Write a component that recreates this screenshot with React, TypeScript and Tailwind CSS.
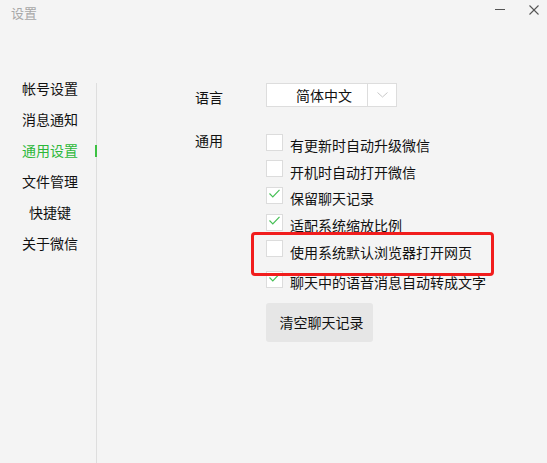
import React from "react";

const FONT = '"Noto Sans CJK SC", "Noto Sans", sans-serif';

const navItems = ["帐号设置", "消息通知", "通用设置", "文件管理", "快捷键", "关于微信"];

const options: { label: string; checked: boolean; extra?: string }[] = [
  { label: "有更新时自动升级微信", checked: false },
  { label: "开机时自动打开微信", checked: false },
  { label: "保留聊天记录", checked: true },
  { label: "适配系统缩放比例", checked: true },
  { label: "使用系统默认浏览器打开网页", checked: false },
  { label: "聊天中的语音消息自动转成文字", checked: true, extra: "mt-[4px]" },
];

function CheckBox({ checked }: { checked: boolean }) {
  return (
    <div className="w-[17px] h-[17px] shrink-0 border border-[#dcdcdc] bg-white">
      {checked && (
        <svg width="15" height="15" viewBox="0 0 15 15" fill="none">
          <polyline points="2.5,5.5 5.8,8.8 12.5,1.8" stroke="#46bf55" strokeWidth="1.2" />
        </svg>
      )}
    </div>
  );
}

export default function App() {
  return (
    <div
      className="relative w-[547px] h-[463px] bg-[#f4f4f4] flex flex-col overflow-hidden text-[#111111]"
      style={{ fontFamily: FONT }}
    >
      {/* title bar */}
      <div className="h-[73px] shrink-0 flex items-start justify-between">
        <div className="pl-[11px] pt-[4px] text-[13px] leading-[18px] text-[#a8a8a8]">设置</div>
        <div className="flex items-start">
          <svg width="12" height="12" viewBox="0 0 12 12" className="mt-[4px] mr-[22px]">
            <line x1="1" y1="5.5" x2="11" y2="5.5" stroke="#555" strokeWidth="1" />
          </svg>
          <svg width="12" height="12" viewBox="0 0 12 12" className="mt-[4px] mr-[7px]">
            <line x1="1.5" y1="1.5" x2="10.5" y2="10.5" stroke="#555" strokeWidth="1.1" />
            <line x1="10.5" y1="1.5" x2="1.5" y2="10.5" stroke="#555" strokeWidth="1.1" />
          </svg>
        </div>
      </div>

      <div className="flex flex-1">
        {/* side navigation */}
        <div className="flex">
          <div className="w-[96px] pl-[4px] flex flex-col">
            {navItems.map((item) => (
              <div
                key={item}
                className={`h-[31px] flex items-center justify-center text-[14px] ${
                  item === "通用设置" ? "text-[#2cb83a]" : "text-[#111111]"
                }`}
              >
                {item}
              </div>
            ))}
          </div>
          <div className="relative w-px mt-[10px] bg-[#dedede]">
            <div className="absolute left-[-1px] top-[62px] w-[2px] h-[12px] bg-[#3cc142]" />
          </div>
        </div>

        {/* general settings */}
        <div className="flex-1 pl-[98px] pt-[10px]">
          <div className="flex items-center h-[24px]">
            <div className="w-[71px] text-[14px] pt-[4px]">语言</div>
            <div className="flex h-[24px] w-[131px] border border-[#dddddd] bg-white">
              <div className="w-[100px] flex items-center pl-[29px] text-[14px]">简体中文</div>
              <div className="flex-1 border-l border-[#dddddd] flex items-center justify-center">
                <svg width="11" height="6" viewBox="0 0 11 6">
                  <polyline points="0.5,0.5 5.5,5 10.5,0.5" fill="none" stroke="#c8c8c8" strokeWidth="1" />
                </svg>
              </div>
            </div>
          </div>

          <div className="flex mt-[22px]">
            <div className="w-[71px] text-[14px] leading-[20px] pt-[1px]">通用</div>
            <div className="flex flex-col">
              {options.map((o) => (
                <div key={o.label} className={`h-[26.6px] flex items-center ${o.extra ?? ""}`}>
                  <CheckBox checked={o.checked} />
                  <span className="ml-[7px] mt-[6px] text-[14px] leading-[18px] whitespace-nowrap">{o.label}</span>
                </div>
              ))}
              <button className="mt-[10px] w-[107px] h-[39px] rounded-[3px] bg-[#e6e6e6] text-[14px] text-[#111111] flex items-center justify-center pl-[4px]">
                清空聊天记录
              </button>
            </div>
          </div>
        </div>
      </div>

      {/* highlight frame */}
      <div className="absolute left-[251px] top-[232px] w-[243px] h-[44px] border-[3px] border-[#f11d1d] rounded-[4px]" />
    </div>
  );
}
